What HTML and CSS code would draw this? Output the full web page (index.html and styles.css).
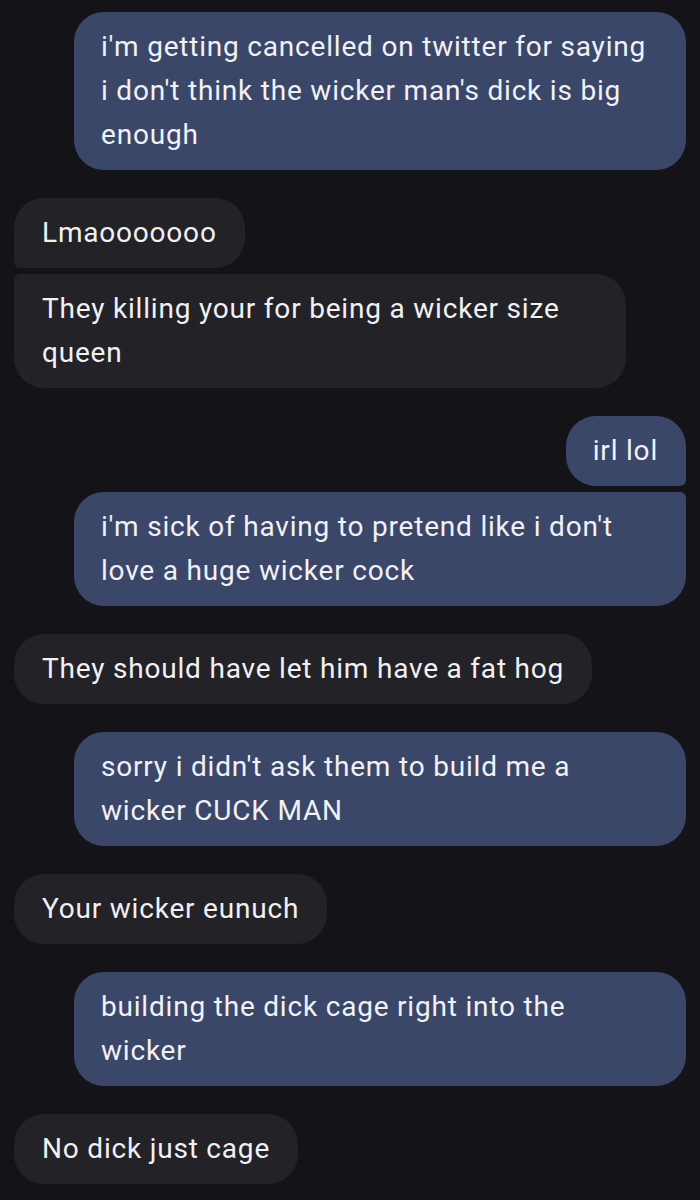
FILE: index.html
```html
<!DOCTYPE html>
<html lang="en">
<head>
    <meta charset="UTF-8">
    <meta name="viewport" content="width=device-width, initial-scale=1.0">
    <title>Messages</title>
    <link rel="stylesheet" href="styles.css">
</head>
<body>
    <div class="thread">
        <div class="group sent">
            <div class="bubble">i'm getting cancelled on twitter for saying i don't think the wicker man's dick is big enough</div>
        </div>

        <div class="group received">
            <div class="bubble">Lmaooooooo</div>
            <div class="bubble">They killing your for being a wicker size queen</div>
        </div>

        <div class="group sent">
            <div class="bubble">irl lol</div>
            <div class="bubble">i'm sick of having to pretend like i don't love a huge wicker cock</div>
        </div>

        <div class="group received">
            <div class="bubble">They should have let him have a fat hog</div>
        </div>

        <div class="group sent">
            <div class="bubble">sorry i didn't ask them to build me a wicker CUCK MAN</div>
        </div>

        <div class="group received">
            <div class="bubble">Your wicker eunuch</div>
        </div>

        <div class="group sent">
            <div class="bubble">building the dick cage right into the wicker</div>
        </div>

        <div class="group received">
            <div class="bubble">No dick just cage</div>
        </div>
    </div>
</body>
</html>
```

FILE: styles.css
```css
html {
    background-color: #131318;
}
body {
    margin: 0;
    background-color: #131318;
    color: #f1f1f4;
    font-family: Roboto, "Liberation Sans", sans-serif;
    font-size: 28px;
    letter-spacing: 0.8px;
    line-height: 44px;
}
.thread {
    display: flex;
    flex-direction: column;
    gap: 28px;
    padding: 12px 14px;
}
.group {
    display: flex;
    flex-direction: column;
    gap: 6px;
}
.group.sent {
    align-items: flex-end;
}
.group.received {
    align-items: flex-start;
}
.bubble {
    max-width: 612px;
    box-sizing: border-box;
    padding: 13px 28px;
    border-radius: 30px;
}
.sent .bubble {
    background-color: #3b4768;
    padding-left: 27px;
}
.received .bubble {
    background-color: #222227;
}
.sent .bubble:not(:last-child) {
    border-bottom-right-radius: 6px;
}
.sent .bubble:not(:first-child) {
    border-top-right-radius: 6px;
}
.received .bubble:not(:last-child) {
    border-bottom-left-radius: 6px;
}
.received .bubble:not(:first-child) {
    border-top-left-radius: 6px;
}
```
